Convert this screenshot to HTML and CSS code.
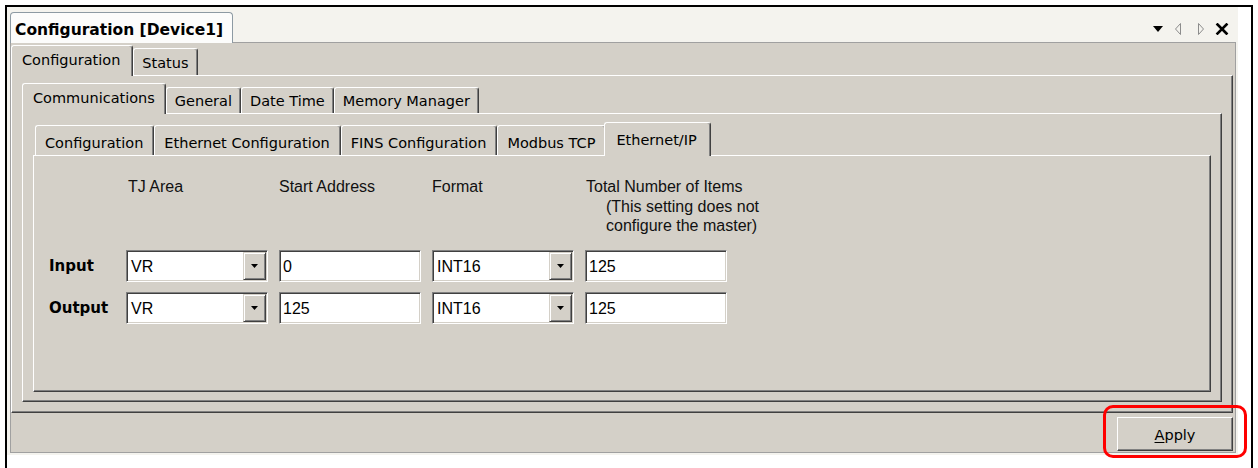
FILE: index.html
```html
<!DOCTYPE html>
<html lang="en">
<head>
<meta charset="utf-8">
<title>Configuration [Device1]</title>
<link rel="stylesheet" href="styles.css">
</head>
<body>
<div class="frame">
  <div class="well">
    <div class="doc-strip">
      <div class="doc-tab">Configuration [Device1]</div>
      <div class="strip-tools">
        <svg class="tool" width="12" height="12" viewBox="0 0 12 12"><polygon points="1,3 11,3 6,9" fill="#000"/></svg>
        <svg class="tool" width="12" height="12" viewBox="0 0 12 12"><polygon points="7.5,0.5 2.5,6 7.5,11.5" fill="none" stroke="#8c8c8c"/></svg>
        <svg class="tool" width="12" height="12" viewBox="0 0 12 12"><polygon points="4.5,0.5 9.5,6 4.5,11.5" fill="none" stroke="#8c8c8c"/></svg>
        <svg class="tool" width="14" height="12" viewBox="0 0 14 12"><path d="M2.5 1.5L11.5 10.5M11.5 1.5L2.5 10.5" stroke="#000" stroke-width="2.6" stroke-linecap="square"/></svg>
      </div>
    </div>
    <div class="dock">
      <div class="tabctl">
        <div class="tabs tabs-outer">
          <div class="tab active">Configuration</div>
          <div class="tab">Status</div>
        </div>
        <div class="page page-outer">
          <div class="tabs tabs-mid">
            <div class="tab active">Communications</div>
            <div class="tab">General</div>
            <div class="tab">Date Time</div>
            <div class="tab">Memory Manager</div>
          </div>
          <div class="page page-mid">
            <div class="tabs tabs-inner">
              <div class="tab">Configuration</div>
              <div class="tab">Ethernet Configuration</div>
              <div class="tab">FINS Configuration</div>
              <div class="tab">Modbus TCP</div>
              <div class="tab active">Ethernet/IP</div>
            </div>
            <div class="page page-inner">
              <div class="eip-form">
                <div class="hdr-spacer"></div>
                <div class="hdr hdr-area">TJ Area</div>
                <div class="hdr">Start Address</div>
                <div class="hdr">Format</div>
                <div class="hdr hdr-total">Total Number of Items<span class="hdr-note">(This setting does not</span><span class="hdr-note">configure the master)</span></div>

                <div class="row-label">Input</div>
                <div class="field combo"><span class="field-value">VR</span><span class="combo-btn"><svg width="7" height="4" viewBox="0 0 7 4"><polygon points="0,0 7,0 3.5,4" fill="#000"/></svg></span></div>
                <div class="field"><span class="field-value">0</span></div>
                <div class="field combo"><span class="field-value">INT16</span><span class="combo-btn"><svg width="7" height="4" viewBox="0 0 7 4"><polygon points="0,0 7,0 3.5,4" fill="#000"/></svg></span></div>
                <div class="field"><span class="field-value">125</span></div>

                <div class="row-label">Output</div>
                <div class="field combo"><span class="field-value">VR</span><span class="combo-btn"><svg width="7" height="4" viewBox="0 0 7 4"><polygon points="0,0 7,0 3.5,4" fill="#000"/></svg></span></div>
                <div class="field"><span class="field-value">125</span></div>
                <div class="field combo"><span class="field-value">INT16</span><span class="combo-btn"><svg width="7" height="4" viewBox="0 0 7 4"><polygon points="0,0 7,0 3.5,4" fill="#000"/></svg></span></div>
                <div class="field"><span class="field-value">125</span></div>
              </div>
            </div>
          </div>
        </div>
      </div>
      <div class="statusbar">
        <button class="apply" type="button"><u>A</u>pply</button>
      </div>
    </div>
  </div>
</div>
<div class="callout"></div>
</body>
</html>
```
FILE: styles.css
```css
* {
  box-sizing: border-box;
}

html,
body {
  margin: 0;
  padding: 0;
}

body {
  position: relative;
  width: 1258px;
  height: 468px;
  overflow: hidden;
  background: #fff;
  color: #000;
  font-family: "DejaVu Sans", Verdana, sans-serif;
}

/* window frame, open at the bottom */
.frame {
  margin: 5px 5px 0 5px;
  height: 463px;
  border: 2px solid #000;
  border-bottom: 0;
}

.well {
  width: 1231px;
  background: #f4f3ee;
  padding-bottom: 2px;
}

/* document tab strip */
.doc-strip {
  height: 35px;
  display: flex;
  align-items: flex-end;
  padding-left: 3px;
}

.doc-tab {
  height: 31px;
  margin-bottom: -1px;
  position: relative;
  z-index: 2;
  padding: 8px 9px 0 4px;
  background: #fcfcfb;
  border: 1px solid #8d9aa3;
  border-bottom: 0;
  border-radius: 4px 4px 0 0;
  font-weight: bold;
  font-size: 15.5px;
  line-height: 18px;
  white-space: nowrap;
}

.strip-tools {
  margin-left: auto;
  margin-right: 9px;
  align-self: flex-start;
  margin-top: 16px;
  display: flex;
  gap: 9px;
}

.tool {
  display: block;
}

/* docked document body */
.dock {
  margin-left: 3px;
  width: 1226px;
  height: 411px;
  border: 1px solid #a0a0a0;
  background: #d4d0c8;
  display: flex;
  flex-direction: column;
}

.tabctl {
  flex: 1;
  min-height: 0;
  display: flex;
  flex-direction: column;
  padding-top: 2px;
  margin-right: 2px;
}

/* classic tab strips */
.tabs {
  flex: none;
  display: flex;
  align-items: flex-end;
  padding-left: 2px;
  position: relative;
  z-index: 1;
}

.tabs-outer { height: 30px; }
.tabs-mid { height: 30px; }
.tabs-inner { height: 33px; }

.tab {
  flex: none;
  display: flex;
  align-items: flex-end;
  padding: 0 8px 3.5px;
  background: #d4d0c8;
  border: 1px solid;
  border-color: #fff #404040 transparent #fff;
  border-bottom: 0;
  border-radius: 3px 3px 0 0;
  box-shadow: inset -1px 0 0 #808080;
  font-size: 14.5px;
  line-height: 17px;
  white-space: nowrap;
}

.tabs-inner .tab {
  padding-left: 9px;
  padding-right: 10px;
}

.tab.active,
.tabs-inner .tab.active {
  margin: 0 0 -1px -2px;
  padding: 0 10px 7.5px 10px;
}

.tabs-outer .tab { height: 27px; }
.tabs-outer .tab.active { height: 31px; padding-right: 12px; }
.tabs-mid .tab { height: 26px; }
.tabs-mid .tab.active { height: 31px; }
.tabs-inner .tab { height: 30px; }
.tabs-inner .tab.active { height: 34px; padding-left: 11px; padding-right: 13px; }

/* tab pages */
.page {
  flex: 1;
  min-height: 0;
  display: flex;
  flex-direction: column;
  border: 1px solid;
  border-color: #fff #404040 #404040 #fff;
  box-shadow: inset -1px -1px 0 #808080;
}

.page-outer { padding: 7px 10px 10px; }
.page-mid { padding: 8px 10px 9px; }
.page-inner { padding: 21px 0 0 15px; }

/* Ethernet/IP mapping form */
.eip-form {
  display: grid;
  grid-template-columns: 66px repeat(4, 142px);
  grid-auto-rows: auto;
  column-gap: 11px;
  row-gap: 10px;
  align-items: start;
}

.hdr {
  font-family: "Liberation Sans", Arial, sans-serif;
  font-size: 16px;
  line-height: 19.5px;
  white-space: nowrap;
  margin-bottom: 4px;
  color: #111;
}

.hdr-area { padding-left: 2px; }
.hdr-total { padding-left: 1px; }

.hdr-note {
  display: block;
  padding-left: 20px;
}

.row-label {
  font-weight: bold;
  font-size: 15px;
  line-height: 32px;
}

.field {
  height: 32px;
  padding: 1px;
  display: flex;
  background: #fff;
  border: 1px solid;
  border-color: #808080 #fff #fff #808080;
  box-shadow: inset 1px 1px 0 #404040, inset -1px -1px 0 #d4d0c8;
  font-family: "Liberation Sans", Arial, sans-serif;
  font-size: 16px;
}

.field-value {
  flex: 1;
  padding: 2px 0 0 2px;
  line-height: 26px;
  white-space: nowrap;
}

.combo .field-value {
  padding-left: 3px;
}

.combo-btn {
  flex: none;
  width: 23px;
  display: flex;
  align-items: center;
  justify-content: center;
  background: #d4d0c8;
  border: 1px solid;
  border-color: #d4d0c8 #404040 #404040 #d4d0c8;
  box-shadow: inset 1px 1px 0 #fff, inset -1px -1px 0 #808080;
}

.combo-btn svg {
  display: block;
}

/* bottom button bar */
.statusbar {
  flex: none;
  height: 39px;
  display: flex;
  justify-content: flex-end;
  align-items: flex-start;
  padding: 4px 2px 0 0;
}

.apply {
  width: 116px;
  height: 34px;
  margin: 0;
  padding: 2px 0 0;
  background: #d4d0c8;
  border: 1px solid;
  border-color: #fff #404040 #404040 #fff;
  box-shadow: inset -1px -1px 0 #808080;
  border-radius: 0;
  font-family: "DejaVu Sans", Verdana, sans-serif;
  font-size: 14.5px;
  color: #000;
  appearance: none;
}

.apply u {
  text-underline-offset: 2px;
}

/* red highlight ring over the Apply button */
.callout {
  position: absolute;
  left: 1103px;
  top: 405px;
  width: 144px;
  height: 53px;
  border: 3px solid #f00;
  border-radius: 10px;
}
```
